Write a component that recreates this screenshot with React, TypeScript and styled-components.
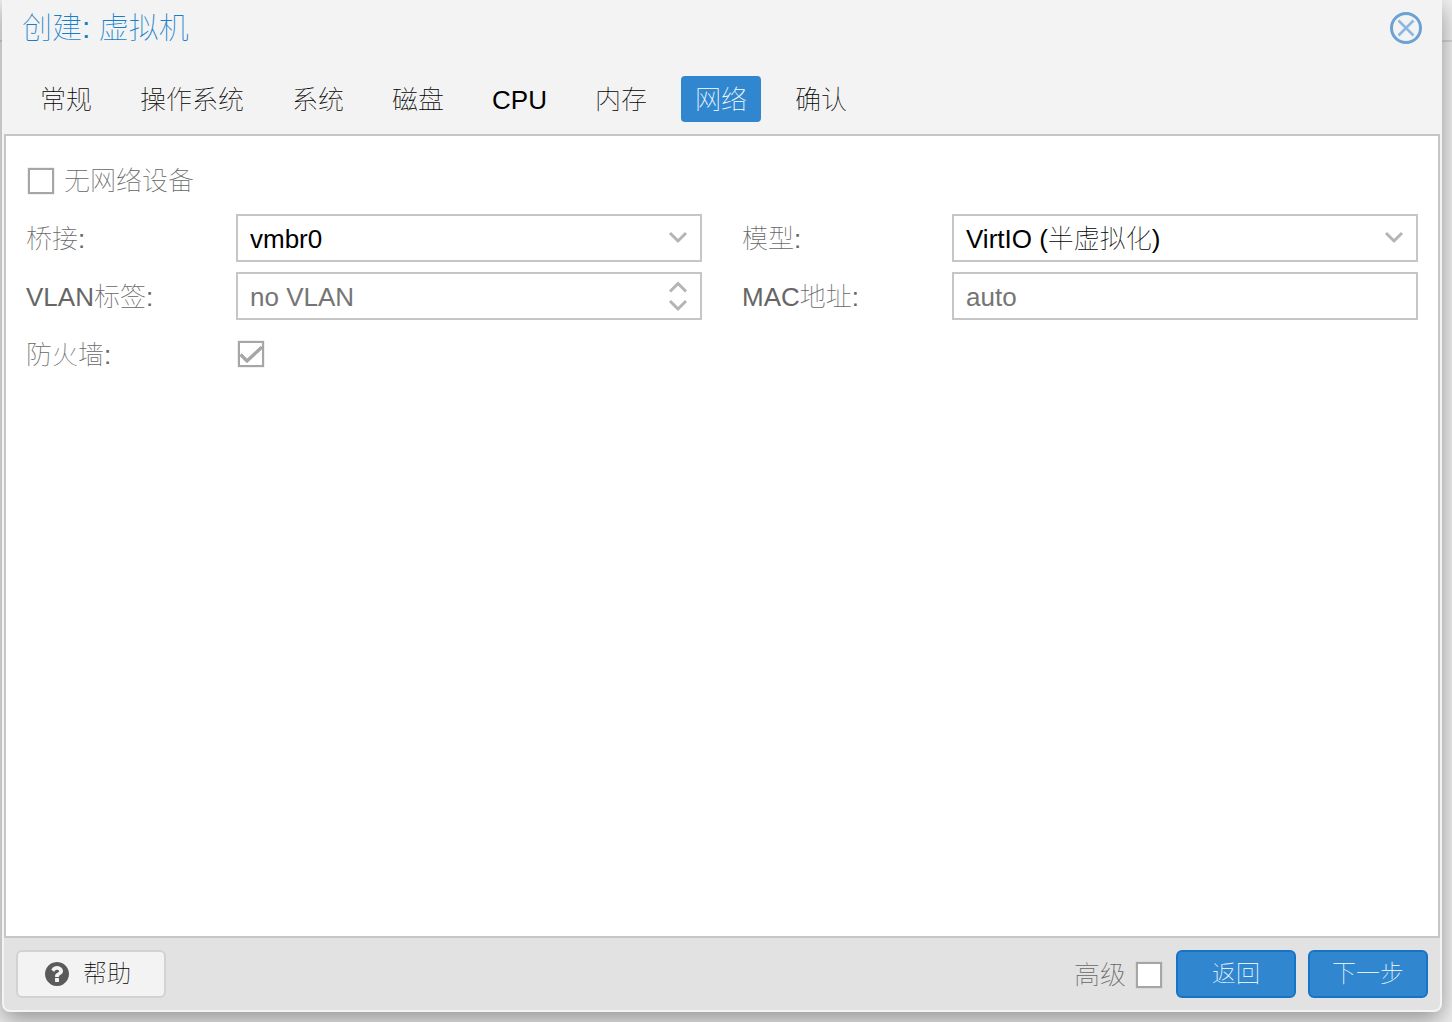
import React, { useState } from "react";
import styled, { createGlobalStyle, css } from "styled-components";

const line = "#c6c6c6";
const sans = `"Liberation Sans", "Noto Sans CJK SC", sans-serif`;

const GlobalStyle = createGlobalStyle`
  *, *::before, *::after { box-sizing: border-box; }
  body {
    margin: 0;
    background: linear-gradient(#f0f0f0 40px, #d6d6d6 40px, #d6d6d6 42px, #f0f0f0 42px);
    font: 100 26px/32px ${sans};
    color: #000;
  }
  button, input, select { font: inherit; }
`;

const Page = styled.div`
  display: flex;
  min-height: 100vh;
  padding: 0 10px 10px 2px;
  overflow: hidden;
`;

const Dialog = styled.section`
  flex: 1;
  min-width: 0;
  display: flex;
  flex-direction: column;
  border: solid #f4f4f4;
  border-width: 0 2px 2px;
  border-radius: 0 0 8px 8px;
  background: #f3f3f3;
  box-shadow: 0 8px 24px rgba(0, 0, 0, 0.4);
`;

const Header = styled.header`
  display: flex;
  align-items: center;
  justify-content: space-between;
  height: 56px;
  padding: 0 18px;
`;

const Title = styled.h1`
  margin: 0;
  font-size: 30px;
  font-weight: 100;
  line-height: 36px;
  color: #157fcc;
`;

const CloseButton = styled.button`
  display: block;
  width: 32px;
  height: 32px;
  padding: 0;
  border: 0;
  background: none;
`;

const Tabs = styled.nav`
  display: flex;
  gap: 20px;
  padding: 20px 22px 12px;
`;

const Tab = styled.button<{ $active: boolean }>`
  height: 46px;
  padding: 2px 14px 0;
  border: 0;
  border-radius: 4px;
  white-space: nowrap;
  color: ${(p) => (p.$active ? "#fff" : "#000")};
  background: ${(p) => (p.$active ? "#3187cf" : "transparent")};
`;

const Panel = styled.form`
  flex: 1;
  display: grid;
  grid-template-columns: 1fr 1fr;
  grid-auto-rows: 48px;
  gap: 10px 40px;
  padding: 20px;
  border: 2px solid ${line};
  background: #fff;
`;

const Field = styled.div<{ $wide?: boolean }>`
  display: flex;
  align-items: center;
  ${(p) => p.$wide && css`grid-column: 1 / -1;`}
`;

const Label = styled.label`
  flex: 0 0 210px;
  padding-top: 2px;
  color: #666;
`;

const CheckLabel = styled.label`
  display: flex;
  align-items: center;
  gap: 8px;
  padding-top: 2px;
  color: #666;
`;

const Control = styled.div`
  position: relative;
  flex: 1;
  min-width: 0;
`;

const controlBox = css`
  display: block;
  width: 100%;
  height: 48px;
  padding: 2px 48px 0 12px;
  border: 2px solid ${line};
  border-radius: 0;
  outline: 0;
  background: #fff;
  color: #000;
`;

const Select = styled.select`
  ${controlBox}
  appearance: none;
`;

const TextInput = styled.input`
  ${controlBox}
  &::placeholder { color: #757575; opacity: 1; }
`;

const Arrow = styled.span`
  position: absolute;
  top: 16px;
  right: 14px;
  display: flex;
  pointer-events: none;
`;

const Spinner = styled.div`
  position: absolute;
  top: 8px;
  right: 14px;
  display: flex;
  flex-direction: column;
  gap: 4px;
`;

const SpinButton = styled.button`
  display: flex;
  padding: 0;
  border: 0;
  background: none;
`;

const CheckWrap = styled.span`
  display: grid;
  padding: 0 2px;
  > * { grid-area: 1 / 1; }
  > svg { pointer-events: none; }
`;

const CheckInput = styled.input`
  appearance: none;
  width: 26px;
  height: 26px;
  margin: 0;
  border: 2px solid #a6a6a6;
  background: #fff;
  box-shadow: 0 0 1px #a6a6a6;
`;

const Footer = styled.footer`
  display: flex;
  align-items: center;
  gap: 12px;
  padding: 12px;
  border-radius: 0 0 6px 6px;
  background: #e2e2e2;
`;

const Push = styled.div`
  margin-left: auto;
`;

const ActionButton = styled.button`
  min-width: 120px;
  height: 48px;
  border: 2px solid #1673c6;
  border-radius: 6px;
  background: #3187cf;
  color: #fff;
  font-size: 24px;
`;

const HelpButton = styled(ActionButton)`
  display: flex;
  align-items: center;
  gap: 14px;
  padding: 0 33px 0 27px;
  border-color: #d2d2d2;
  background: #f3f3f3;
  color: #000;
`;

const Chevron = ({ up = false }: { up?: boolean }) => (
  <svg width="20" height="14" viewBox="0 0 20 14" fill="none" stroke="#b4b4b4" strokeWidth="3">
    <path d={up ? "M2 11.5 10 3.5 18 11.5" : "M2 3 10 11 18 3"} />
  </svg>
);

const CloseIcon = () => (
  <svg width="32" height="32" viewBox="0 0 32 32" fill="none">
    <circle cx="16" cy="16" r="14.5" stroke="#6ba2d3" strokeWidth="3" />
    <path d="M8.5 8.5 23.5 23.5M23.5 8.5 8.5 23.5" stroke="#8db7e3" strokeWidth="2.6" />
  </svg>
);

const HelpIcon = () => (
  <svg width="24" height="24" viewBox="128 128 1536 1536" fill="#5a5a5a">
    <path d="M1024 1376v-192q0-14-9-23t-23-9h-192q-14 0-23 9t-9 23v192q0 14 9 23t23 9h192q14 0 23-9t9-23zm256-672q0-88-55.500-163t-138.500-116-170-41q-243 0-371 213-15 24 8 42l132 100q7 6 19 6 16 0 25-12 53-68 86-92 34-24 86-24 48 0 85.500 26t37.500 59q0 38-20 61t-68 45q-63 28-115.500 86.500t-52.500 125.500v36q0 14 9 23t23 9h192q14 0 23-9t9-23q0-19 21.500-49.500t54.500-49.500q32-18 49-28.500t46-35 44.500-48 28-60.500 12.500-81zm384 192q0 209-103 385.500t-279.500 279.500-385.500 103-385.500-103-279.500-279.500-103-385.500 103-385.500 279.500-279.500 385.500-103 385.500 103 279.500 279.500 103 385.500z" />
  </svg>
);

function Checkbox({ id, initial = false }: { id: string; initial?: boolean }) {
  const [checked, setChecked] = useState(initial);
  return (
    <CheckWrap>
      <CheckInput id={id} type="checkbox" checked={checked} onChange={() => setChecked(!checked)} />
      {checked && (
        <svg width="26" height="26" viewBox="0 0 26 26" fill="none" stroke="#a6a6a6" strokeWidth="3.4">
          <path d="M2.500 13.500 9 20 24 6" />
        </svg>
      )}
    </CheckWrap>
  );
}

const tabs = ["常规", "操作系统", "系统", "磁盘", "CPU", "内存", "网络", "确认"];

export default function App() {
  const [active, setActive] = useState("网络");
  return (
    <>
      <GlobalStyle />
      <Page>
        <Dialog>
          <Header>
            <Title>创建: 虚拟机</Title>
            <CloseButton type="button" aria-label="关闭"><CloseIcon /></CloseButton>
          </Header>
          <Tabs>
            {tabs.map((name) => (
              <Tab key={name} type="button" $active={name === active} onClick={() => setActive(name)}>
                {name}
              </Tab>
            ))}
          </Tabs>
          <Panel>
            <Field $wide>
              <CheckLabel htmlFor="no-device"><Checkbox id="no-device" />无网络设备</CheckLabel>
            </Field>
            <Field>
              <Label htmlFor="bridge">桥接:</Label>
              <Control>
                <Select id="bridge"><option>vmbr0</option></Select>
                <Arrow><Chevron /></Arrow>
              </Control>
            </Field>
            <Field>
              <Label htmlFor="model">模型:</Label>
              <Control>
                <Select id="model"><option>VirtIO (半虚拟化)</option></Select>
                <Arrow><Chevron /></Arrow>
              </Control>
            </Field>
            <Field>
              <Label htmlFor="vlan">VLAN标签:</Label>
              <Control>
                <TextInput id="vlan" type="text" inputMode="numeric" placeholder="no VLAN" />
                <Spinner>
                  <SpinButton type="button" aria-label="增加"><Chevron up /></SpinButton>
                  <SpinButton type="button" aria-label="减少"><Chevron /></SpinButton>
                </Spinner>
              </Control>
            </Field>
            <Field>
              <Label htmlFor="mac">MAC地址:</Label>
              <Control><TextInput id="mac" type="text" placeholder="auto" /></Control>
            </Field>
            <Field>
              <Label htmlFor="firewall">防火墙:</Label>
              <Checkbox id="firewall" initial />
            </Field>
          </Panel>
          <Footer>
            <HelpButton type="button"><HelpIcon />帮助</HelpButton>
            <Push>
              <CheckLabel htmlFor="advanced">高级<Checkbox id="advanced" /></CheckLabel>
            </Push>
            <ActionButton type="button">返回</ActionButton>
            <ActionButton type="button">下一步</ActionButton>
          </Footer>
        </Dialog>
      </Page>
    </>
  );
}
